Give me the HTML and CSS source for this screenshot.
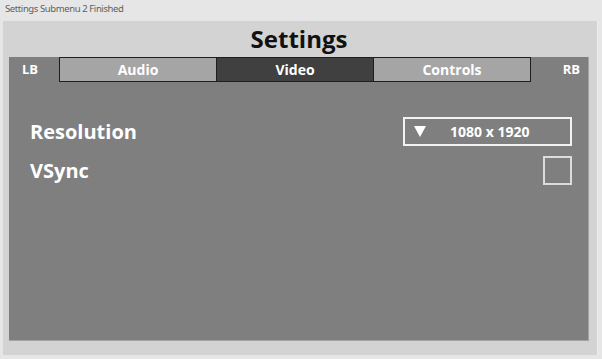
FILE: index.html
```html
<!DOCTYPE html>
<html lang="en">
<head>
    <meta charset="UTF-8">
    <title>Settings Submenu 2 Finished</title>
    <link rel="stylesheet" href="styles.css">
</head>
<body>
    <div class="caption">Settings Submenu 2 Finished</div>

    <div class="window">
        <h1 class="title">Settings</h1>

        <div class="screen">
            <div class="tab-row">
                <div class="bumper bumper-left">LB</div>
                <div class="tabs">
                    <div class="tab">Audio</div>
                    <div class="tab active">Video</div>
                    <div class="tab">Controls</div>
                </div>
                <div class="bumper bumper-right">RB</div>
            </div>

            <div class="options">
                <div class="option">
                    <span class="option-label">Resolution</span>
                    <div class="dropdown">
                        <span class="arrow"></span>
                        <span class="dropdown-value">1080 x 1920</span>
                    </div>
                </div>
                <div class="option">
                    <span class="option-label">VSync</span>
                    <div class="checkbox"></div>
                </div>
            </div>
        </div>
    </div>
</body>
</html>
```

FILE: styles.css
```css
body {
    margin: 0;
    background: #e6e6e6;
    font-family: 'Open Sans', sans-serif;
    width: 602px;
    height: 359px;
    overflow: hidden;
}
.caption {
    height: 21px;
    padding-left: 5px;
    font-family: 'Noto Sans', sans-serif;
    font-size: 9.5px;
    letter-spacing: -0.4px;
    line-height: 18px;
    color: #606060;
}
.window {
    margin: 0 4px 0 3px;
    height: 334px;
    background: #d3d3d3;
    border-right: 1px solid #ececec;
    padding: 0 8px 0 6px;
    box-sizing: border-box;
}
.title {
    margin: 0;
    height: 36px;
    font-size: 24px;
    font-weight: 700;
    line-height: 35px;
    text-align: center;
    color: #111;
}
.screen {
    height: 284px;
    background: #7f7f7f;
    border-right: 1px solid #a3a3a3;
    border-bottom: 1px solid #a3a3a3;
    box-sizing: border-box;
}
.tab-row {
    display: flex;
    height: 25px;
}
.bumper {
    color: #fff;
    font-size: 13px;
    font-weight: 700;
    line-height: 24px;
}
.bumper-left {
    width: 50px;
    padding-left: 13px;
    box-sizing: border-box;
}
.bumper-right {
    flex: 1;
    text-align: right;
    padding-right: 8px;
}
.tabs {
    display: flex;
    width: 472px;
}
.tab {
    flex: 1;
    background: #a5a5a5;
    border: 1px solid #1e1e1e;
    margin-left: -1px;
    color: #fff;
    font-size: 14px;
    font-weight: 700;
    text-align: center;
    line-height: 24px;
}
.tab:first-child {
    margin-left: 0;
}
.tab.active {
    background: #404040;
}
.options {
    padding: 35px 16px 0 21px;
    display: flex;
    flex-direction: column;
    gap: 10px;
}
.option {
    display: flex;
    justify-content: space-between;
    align-items: center;
    height: 29px;
}
.option-label {
    color: #fff;
    font-size: 20px;
    font-weight: 700;
}
.dropdown {
    width: 169px;
    height: 29px;
    border: 2px solid #f2f2f2;
    box-sizing: border-box;
    display: flex;
    align-items: center;
    padding-left: 9px;
}
.arrow {
    width: 0;
    height: 0;
    border-left: 6px solid transparent;
    border-right: 6px solid transparent;
    border-top: 11px solid #fff;
}
.dropdown-value {
    margin-left: 24px;
    color: #fff;
    font-size: 14px;
    font-weight: 700;
}
.checkbox {
    width: 29px;
    height: 29px;
    border: 2px solid #dcdcdc;
    box-sizing: border-box;
}
```
